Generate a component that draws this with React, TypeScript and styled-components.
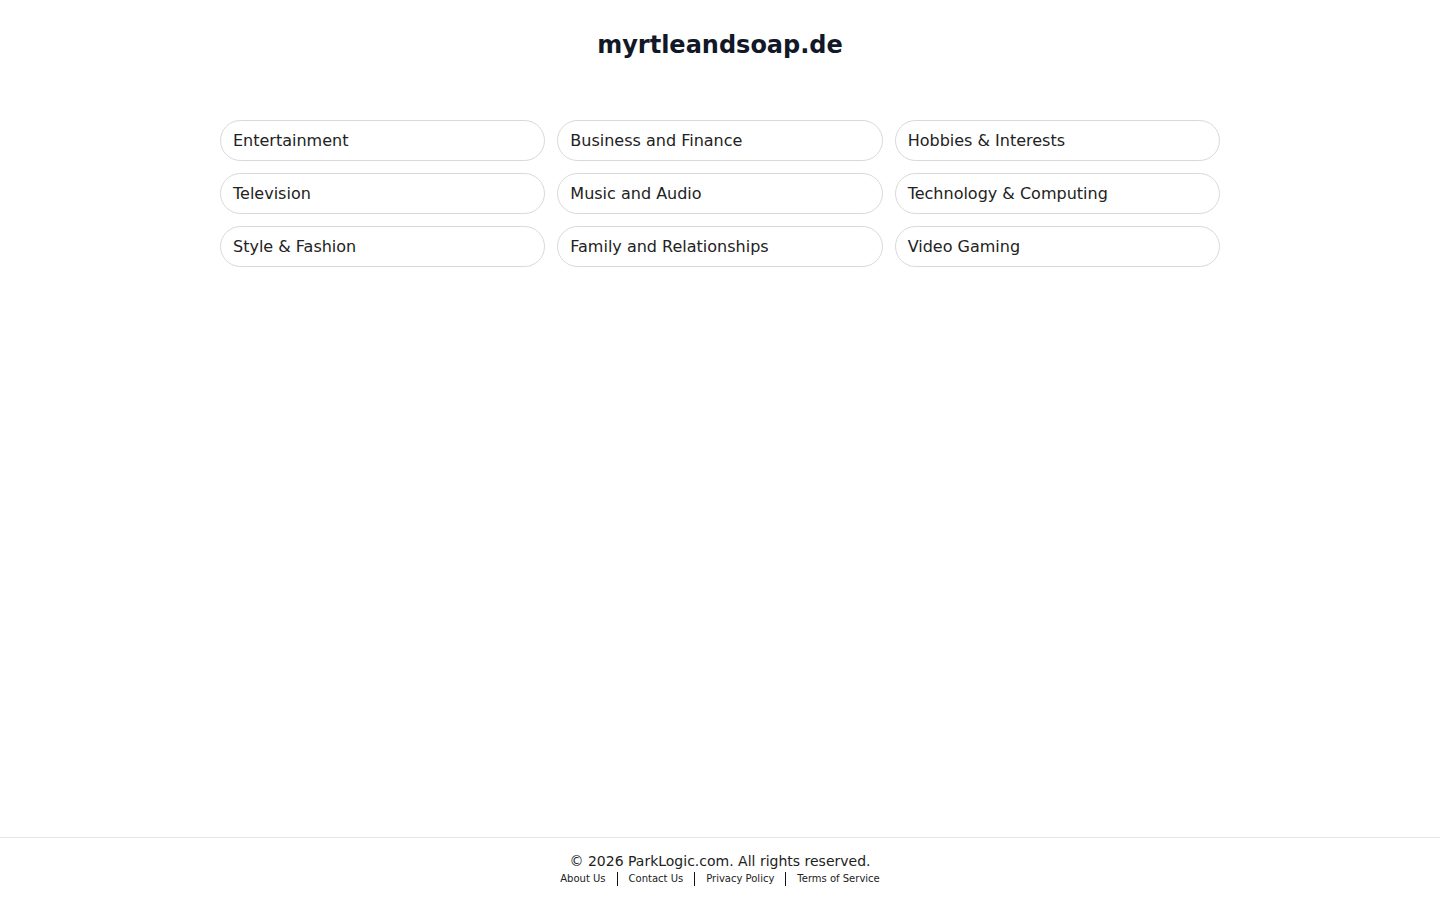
import {Fragment} from "react";
import styled, {createGlobalStyle} from "styled-components";

const GlobalStyle = createGlobalStyle`
	html, body {
		margin: 0;
		padding: 0;
		background: #fff;
		font-family: "DejaVu Sans", "Liberation Sans", sans-serif;
	}
	* {
		box-sizing: border-box;
	}
`;

const categories = [
  "Entertainment",
  "Business and Finance",
  "Hobbies & Interests",
  "Television",
  "Music and Audio",
  "Technology & Computing",
  "Style & Fashion",
  "Family and Relationships",
  "Video Gaming",
];

const footerLinks = ["About Us", "Contact Us", "Privacy Policy", "Terms of Service"];

export default function App() {
  return (
    <Page>
      <GlobalStyle/>
      <Main>
        <Title>myrtleandsoap.de</Title>
        <Grid>
          {categories.map((c) => (
            <Pill key={c} href="#">{c}</Pill>
          ))}
        </Grid>
      </Main>
      <Footer>
        <Copyright>© 2026 ParkLogic.com. All rights reserved.</Copyright>
        <Links>
          {footerLinks.map((l, i) => (
            <Fragment key={l}>
              {i > 0 ? <Separator/> : undefined}
              <FooterLink href="#">{l}</FooterLink>
            </Fragment>
          ))}
        </Links>
      </Footer>
    </Page>
  );
}

const Page = styled.div`
	min-height: 100vh;
	display: flex;
	flex-direction: column;
`;

const Main = styled.main`
	flex: 1;
	display: flex;
	flex-direction: column;
	align-items: center;
	padding-top: 29px;
`;

const Title = styled.h1`
	margin: 0;
	font-size: 24px;
	line-height: 32px;
	font-weight: bold;
	color: #111827;
`;

const Grid = styled.div`
	display: grid;
	grid-template-columns: repeat(3, 1fr);
	gap: 12px;
	width: 1000px;
	margin-top: 59px;
`;

const Pill = styled.a`
	display: flex;
	align-items: center;
	height: 41px;
	padding: 0 12px;
	border: 1px solid #d9d9d9;
	border-radius: 999px;
	font-size: 16px;
	color: #222;
	text-decoration: none;
`;

const Footer = styled.footer`
	border-top: 1px solid #e5e5e5;
	display: flex;
	flex-direction: column;
	align-items: center;
	padding: 14px 0 14px;
`;

const Copyright = styled.div`
	font-size: 14px;
	line-height: 18px;
	color: #222;
`;

const Links = styled.div`
	display: flex;
	align-items: center;
	margin-top: 1px;
`;

const FooterLink = styled.a`
	font-size: 10px;
	line-height: 15px;
	color: #222;
	text-decoration: none;
`;

const Separator = styled.span`
	width: 1px;
	height: 14px;
	margin: 0 11px;
	background: #111;
`;
